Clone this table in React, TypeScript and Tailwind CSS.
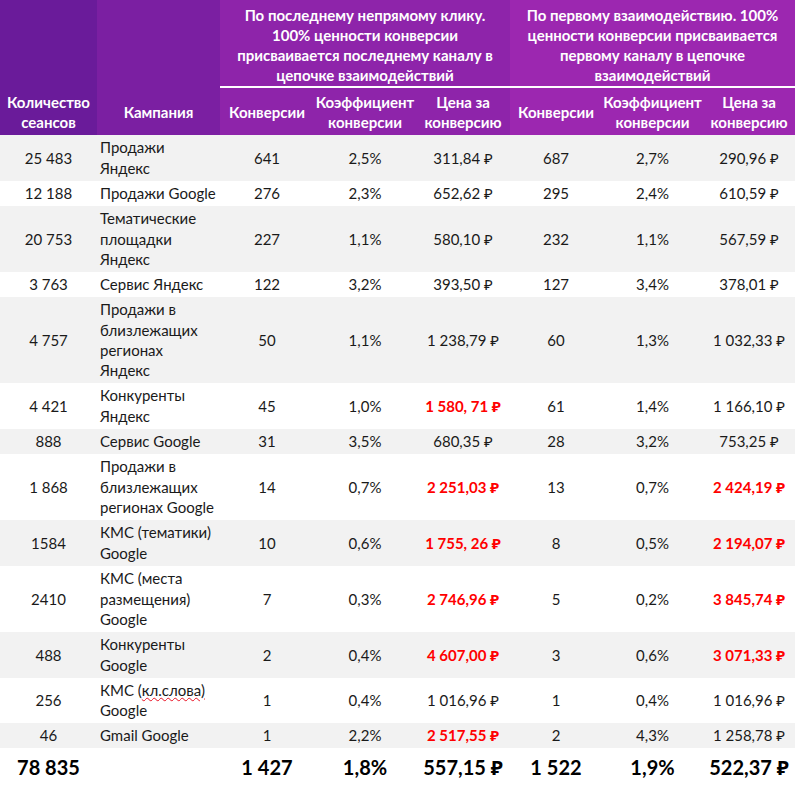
import React from 'react';

type Row = {
  sessions: string;
  campaign: React.ReactNode;
  lines: 1 | 2 | 3 | 4;
  last: [string, string, string, boolean?];
  first: [string, string, string, boolean?];
};

const cols = 'grid grid-cols-[97px_123px_94px_102px_94px_92px_101px_92px]';

const heights: Record<number, string> = {
  1: 'h-[25px]',
  2: 'h-[45.5px]',
  3: 'h-[66.5px]',
  4: 'h-[86px]',
};

const rows: Row[] = [
  { sessions: '25 483', campaign: 'Продажи\nЯндекс', lines: 2, last: ['641', '2,5%', '311,84 ₽'], first: ['687', '2,7%', '290,96 ₽'] },
  { sessions: '12 188', campaign: 'Продажи Google', lines: 1, last: ['276', '2,3%', '652,62 ₽'], first: ['295', '2,4%', '610,59 ₽'] },
  { sessions: '20 753', campaign: 'Тематические\nплощадки\nЯндекс', lines: 3, last: ['227', '1,1%', '580,10 ₽'], first: ['232', '1,1%', '567,59 ₽'] },
  { sessions: '3 763', campaign: 'Сервис Яндекс', lines: 1, last: ['122', '3,2%', '393,50 ₽'], first: ['127', '3,4%', '378,01 ₽'] },
  { sessions: '4 757', campaign: 'Продажи в\nблизлежащих\nрегионах\nЯндекс', lines: 4, last: ['50', '1,1%', '1 238,79 ₽'], first: ['60', '1,3%', '1 032,33 ₽'] },
  { sessions: '4 421', campaign: 'Конкуренты\nЯндекс', lines: 2, last: ['45', '1,0%', '1 580, 71 ₽', true], first: ['61', '1,4%', '1 166,10 ₽'] },
  { sessions: '888', campaign: 'Сервис Google', lines: 1, last: ['31', '3,5%', '680,35 ₽'], first: ['28', '3,2%', '753,25 ₽'] },
  { sessions: '1 868', campaign: 'Продажи в\nблизлежащих\nрегионах Google', lines: 3, last: ['14', '0,7%', '2 251,03 ₽', true], first: ['13', '0,7%', '2 424,19 ₽', true] },
  { sessions: '1584', campaign: 'КМС (тематики)\nGoogle', lines: 2, last: ['10', '0,6%', '1 755, 26 ₽', true], first: ['8', '0,5%', '2 194,07 ₽', true] },
  { sessions: '2410', campaign: 'КМС (места\nразмещения)\nGoogle', lines: 3, last: ['7', '0,3%', '2 746,96 ₽', true], first: ['5', '0,2%', '3 845,74 ₽', true] },
  { sessions: '488', campaign: 'Конкуренты\nGoogle', lines: 2, last: ['2', '0,4%', '4 607,00 ₽', true], first: ['3', '0,6%', '3 071,33 ₽', true] },
  {
    sessions: '256',
    campaign: (
      <span>
        КМС (
        <span className="underline decoration-wavy decoration-[#e81123] decoration-1 underline-offset-[1px]">кл.слова)</span>
        {'\n'}Google
      </span>
    ),
    lines: 2,
    last: ['1', '0,4%', '1 016,96 ₽'],
    first: ['1', '0,4%', '1 016,96 ₽'],
  },
  { sessions: '46', campaign: 'Gmail Google', lines: 1, last: ['1', '2,2%', '2 517,55 ₽', true], first: ['2', '4,3%', '1 258,78 ₽'] },
];

const Cell: React.FC<{ children: React.ReactNode; red?: boolean }> = ({ children, red }) => (
  <div className={red ? 'flex items-center justify-center font-bold text-[#ff0000]' : 'flex items-center justify-center'}>
    {children}
  </div>
);

const SubHead: React.FC<{ children: React.ReactNode }> = ({ children }) => (
  <div className="flex items-center justify-center text-center whitespace-pre-line">{children}</div>
);

export default function App() {
  return (
    <div className="w-[795px] h-[786px] overflow-hidden bg-white font-['Lato','Noto_Sans','DejaVu_Sans',sans-serif] text-[15px] leading-[20.4px] text-[#1a1a1a]">
      <header className="flex h-[135px] text-white font-bold text-[15px] leading-[20px]">
        <div className="w-[97px] bg-[#6a1b9a] flex flex-col justify-end">
          <div className="h-[47px] flex items-center justify-center text-center">
            Количество
            <br />
            сеансов
          </div>
        </div>
        <div className="w-[123px] bg-[#7b1fa2] flex flex-col justify-end">
          <div className="h-[47px] flex items-center justify-center">Кампания</div>
        </div>

        <div className="w-[575px] flex flex-col">
          <div className="flex h-[86px]">
            <div className="w-[290px] bg-[#8e24aa] pt-[5px] text-center whitespace-nowrap">
              По последнему непрямому клику.
              <br />
              100% ценности конверсии
              <br />
              присваивается последнему каналу в
              <br />
              цепочке взаимодействий
            </div>
            <div className="w-[285px] bg-[#9c27b0] pt-[5px] text-center whitespace-nowrap">
              По первому взаимодействию. 100%
              <br />
              ценности конверсии присваивается
              <br />
              первому каналу в цепочке
              <br />
              взаимодействий
            </div>
          </div>
          <div className="h-[2px] bg-white" />
          <div className="flex h-[47px]">
            <div className="w-[290px] bg-[#8e24aa] grid grid-cols-[94px_102px_94px]">
              <SubHead>Конверсии</SubHead>
              <SubHead>{'Коэффициент\nконверсии'}</SubHead>
              <SubHead>{'Цена за\nконверсию'}</SubHead>
            </div>
            <div className="w-[285px] bg-[#9c27b0] grid grid-cols-[92px_101px_92px]">
              <SubHead>Конверсии</SubHead>
              <SubHead>{'Коэффициент\nконверсии'}</SubHead>
              <SubHead>{'Цена за\nконверсию'}</SubHead>
            </div>
          </div>
        </div>
      </header>

      <main>
        {rows.map((r, i) => (
          <div
            key={r.sessions + i}
            className={`${cols} ${heights[r.lines]} ${i % 2 === 0 ? 'bg-[#f2f2f2]' : 'bg-white'}`}
          >
            <Cell>{r.sessions}</Cell>
            <div className="flex items-center pl-[3px] whitespace-pre-line">{r.campaign}</div>
            <Cell>{r.last[0]}</Cell>
            <Cell>{r.last[1]}</Cell>
            <Cell red={r.last[3]}>{r.last[2]}</Cell>
            <Cell>{r.first[0]}</Cell>
            <Cell>{r.first[1]}</Cell>
            <Cell red={r.first[3]}>{r.first[2]}</Cell>
          </div>
        ))}

        <div className={`${cols} h-[38px] bg-white font-bold text-[20px] text-black`}>
          <Cell>78 835</Cell>
          <div />
          <Cell>1 427</Cell>
          <Cell>1,8%</Cell>
          <Cell>557,15 ₽</Cell>
          <Cell>1 522</Cell>
          <Cell>1,9%</Cell>
          <Cell>522,37 ₽</Cell>
        </div>
      </main>
    </div>
  );
}
